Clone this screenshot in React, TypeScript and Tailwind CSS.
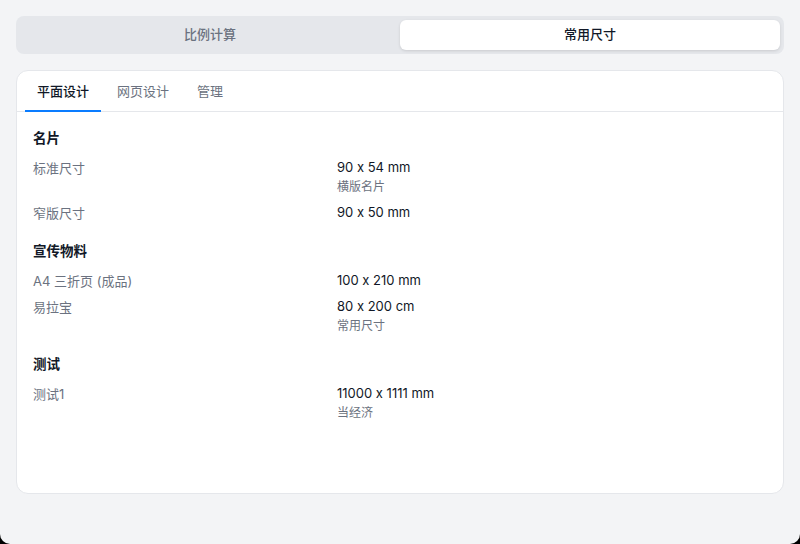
import React, { useState } from "react";

type Row = { label: string; value: string; note?: string };
type Section = { title: string; rows: Row[] };

const sections: Section[] = [
  {
    title: "名片",
    rows: [
      { label: "标准尺寸", value: "90 x 54 mm", note: "横版名片" },
      { label: "窄版尺寸", value: "90 x 50 mm" },
    ],
  },
  {
    title: "宣传物料",
    rows: [
      { label: "A4 三折页 (成品)", value: "100 x 210 mm" },
      { label: "易拉宝", value: "80 x 200 cm", note: "常用尺寸" },
    ],
  },
  {
    title: "测试",
    rows: [{ label: "测试1", value: "11000 x 1111 mm", note: "当经济" }],
  },
];

export default function App() {
  const [mode, setMode] = useState(1);
  const [tab, setTab] = useState(0);
  const tabs = ["平面设计", "网页设计", "管理"];
  return (
    <div
      className="w-[800px] h-[544px] bg-black [font-feature-settings:'calt'_0]"
      style={{ fontFamily: 'Inter, "Noto Sans CJK SC", sans-serif' }}
    >
      <div className="w-full h-full bg-[#f3f4f6] rounded-b-[10px] p-4 flex flex-col gap-4">
        <div className="h-[38px] bg-[#e5e7eb] rounded-lg p-1 flex">
          {["比例计算", "常用尺寸"].map((t, i) => (
            <button
              key={t}
              onClick={() => setMode(i)}
              className={
                i === mode
                  ? "flex-1 rounded-md bg-white text-[13px] font-medium text-[#111827] shadow-[0_1px_3px_rgba(0,0,0,0.12)]"
                  : "flex-1 rounded-md text-[13px] font-medium text-[#6b7280]"
              }
            >
              {t}
            </button>
          ))}
        </div>
        <div className="h-[424px] bg-white rounded-xl border border-[#e5e7eb] flex flex-col">
          <div className="h-[41px] px-2 flex gap-1 border-b border-[#e5e7eb] shrink-0">
            {tabs.map((t, i) => (
              <button
                key={t}
                onClick={() => setTab(i)}
                className={
                  i === tab
                    ? "px-3 -mb-px border-b-2 border-[#0a7cff] text-[13px] font-medium text-[#111827] pt-[2px]"
                    : "px-3 -mb-px border-b-2 border-transparent text-[13px] text-[#6b7280] pt-[2px]"
                }
              >
                {t}
              </button>
            ))}
          </div>
          <div className="px-4 pt-4 flex flex-col gap-[18px]">
            {sections.map((s) => (
              <div key={s.title} className="flex flex-col">
                <div className="text-[13.5px] leading-5 font-semibold text-[#111827] mb-[9px]">
                  {s.title}
                </div>
                <div className="flex flex-col gap-[5px]">
                  {s.rows.map((r) => (
                    <div key={r.label} className="flex">
                      <div className="w-[304px] text-[13px] leading-5 text-[#6b7280] pt-px">
                        {r.label}
                      </div>
                      <div className="flex flex-col">
                        <div className="text-[13px] leading-5 text-[#111827]">{r.value}</div>
                        {r.note && (
                          <div className="text-[12px] leading-5 text-[#6b7280]">{r.note}</div>
                        )}
                      </div>
                    </div>
                  ))}
                </div>
              </div>
            ))}
          </div>
        </div>
      </div>
    </div>
  );
}
